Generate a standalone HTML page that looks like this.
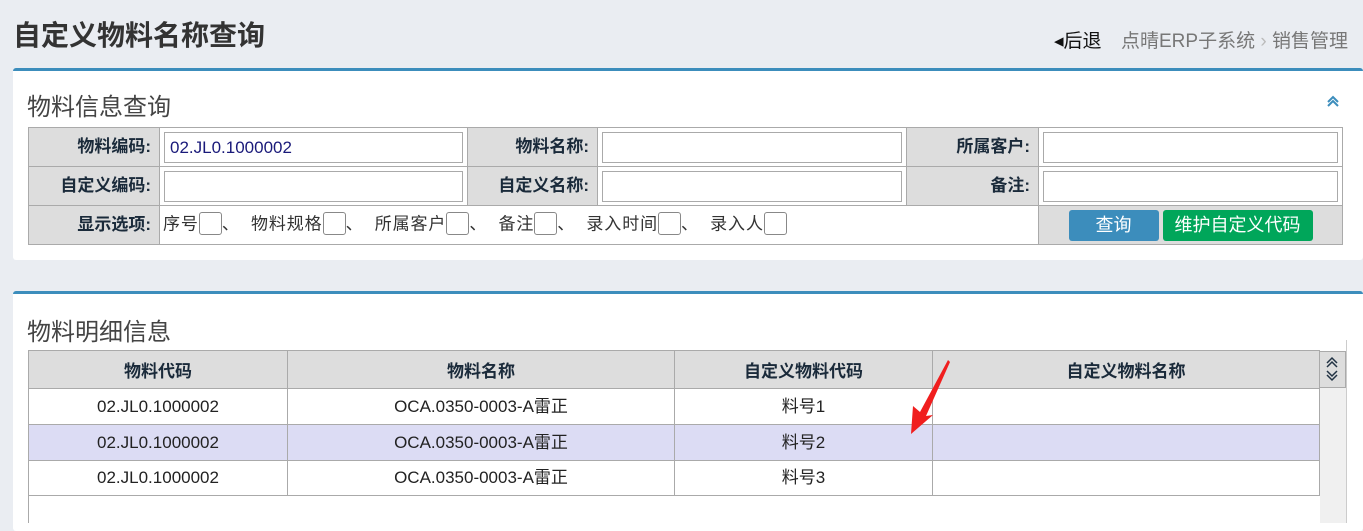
<!DOCTYPE html>
<html><head><meta charset="utf-8"><style>
*{margin:0;padding:0;box-sizing:border-box}
body{width:1363px;height:523px;background:#eaedf2;font-family:"Liberation Sans","Noto Sans CJK SC",sans-serif;position:relative;overflow:hidden;color:#333}
.a{position:absolute}
.panel{position:absolute;left:13px;width:1350px;background:#fff;border-top:3px solid #3c8dbc;border-radius:3px}
table{border-collapse:collapse;position:absolute}
td{border:1px solid #aaa;font-size:17px;line-height:20px}
.l{background:#dddddd;text-align:right;font-weight:bold;color:#1a2a3a;padding-right:8px}
.in{border:1px solid #aaa;height:31px;margin:0 4px;font-size:17px;color:#1a1a7a;padding-left:5px;line-height:29px}
.cb{display:inline-block;width:23px;height:23px;border:1px solid #888;border-radius:3px;vertical-align:middle;margin-bottom:3px}
.opt{font-size:17px;letter-spacing:0.9px}
.t2 td{text-align:center;color:#222;vertical-align:middle;line-height:20px}
.t2 th{background:#ddd;border:1px solid #aaa;font-size:17px;color:#1a2a3a}
</style></head><body>
<div class="a" style="left:13px;top:14px;font-size:28px;font-weight:bold;color:#333">自定义物料名称查询</div>
<div class="a" style="left:1054px;top:26px;font-size:19px;color:#111">◂后退</div>
<div class="a" style="left:1121px;top:26px;font-size:19px;color:#777">点晴ERP子系统 <span style="color:#bbb">›</span> 销售管理</div>

<div class="panel" style="top:68px;height:192px">
<div class="a" style="left:14px;top:16px;font-size:24px;color:#444">物料信息查询</div>
<svg class="a" style="left:1313px;top:24px" width="14" height="12"><path d="M2 7 L7 2 L12 7 M2 11 L7 6 L12 11" stroke="#3c8dbc" stroke-width="2" fill="none"/></svg>
</div>
<table style="left:28px;top:127px;width:1315px">
<tr style="height:39px"><td class="l" style="width:131px">物料编码:</td><td style="width:308px"><div class="in">02.JL0.1000002</div></td><td class="l" style="width:130px">物料名称:</td><td style="width:309px"><div class="in"></div></td><td class="l" style="width:132px">所属客户:</td><td><div class="in"></div></td></tr>
<tr style="height:39px"><td class="l">自定义编码:</td><td><div class="in"></div></td><td class="l">自定义名称:</td><td><div class="in"></div></td><td class="l">备注:</td><td><div class="in"></div></td></tr>
<tr style="height:39px"><td class="l">显示选项:</td><td colspan="4" class="opt" style="padding-left:3px">序号<span class="cb"></span>、 &nbsp;物料规格<span class="cb"></span>、 &nbsp;所属客户<span class="cb"></span>、 &nbsp;备注<span class="cb"></span>、 &nbsp;录入时间<span class="cb"></span>、 &nbsp;录入人<span class="cb"></span></td><td style="background:#ddd;text-align:center"><span style="display:inline-block;width:90px;height:31px;background:#3c8dbc;color:#fff;border-radius:3px;line-height:31px;margin-right:4px;font-size:18px">查询</span><span style="display:inline-block;width:150px;height:31px;background:#00a65a;color:#fff;border-radius:3px;line-height:31px;font-size:18px">维护自定义代码</span></td></tr>
</table>

<div class="panel" style="top:291px;height:240px">
<div class="a" style="left:14px;top:18px;font-size:24px;color:#444">物料明细信息</div>
</div>
<div class="a" style="left:1320px;top:388px;width:26px;height:135px;background:#f0f0f0"></div>
<div class="a" style="left:1319px;top:351px;width:27px;height:37px;background:#ddd;border:1px solid #aaa"></div>
<svg class="a" style="left:1324px;top:355px" width="16" height="28"><path d="M3 8 L8 3 L13 8 M3 12 L8 7 L13 12 M3 16 L8 21 L13 16 M3 20 L8 25 L13 20" stroke="#234" stroke-width="1.5" fill="none"/></svg>
<div class="a" style="left:1346px;top:340px;width:1px;height:183px;background:#ccc"></div>
<table class="t2" style="left:28px;top:350px;width:1292px">
<tr style="height:38px"><th style="width:259px">物料代码</th><th style="width:387px">物料名称</th><th style="width:258px">自定义物料代码</th><th>自定义物料名称</th></tr>
<tr style="height:36px"><td>02.JL0.1000002</td><td>OCA.0350-0003-A雷正</td><td>料号1</td><td></td></tr>
<tr style="height:36px;background:#dcdcf4"><td>02.JL0.1000002</td><td>OCA.0350-0003-A雷正</td><td>料号2</td><td></td></tr>
<tr style="height:35px"><td>02.JL0.1000002</td><td>OCA.0350-0003-A雷正</td><td>料号3</td><td></td></tr>
</table>
<div class="a" style="left:28px;top:495px;width:1px;height:28px;background:#aaa"></div>
<svg class="a" style="left:900px;top:355px" width="60" height="85"><polygon points="48,5 50,7 26,61 33,60 11,79 13,51 20,57" fill="#f01e1e"/></svg>
</body></html>
